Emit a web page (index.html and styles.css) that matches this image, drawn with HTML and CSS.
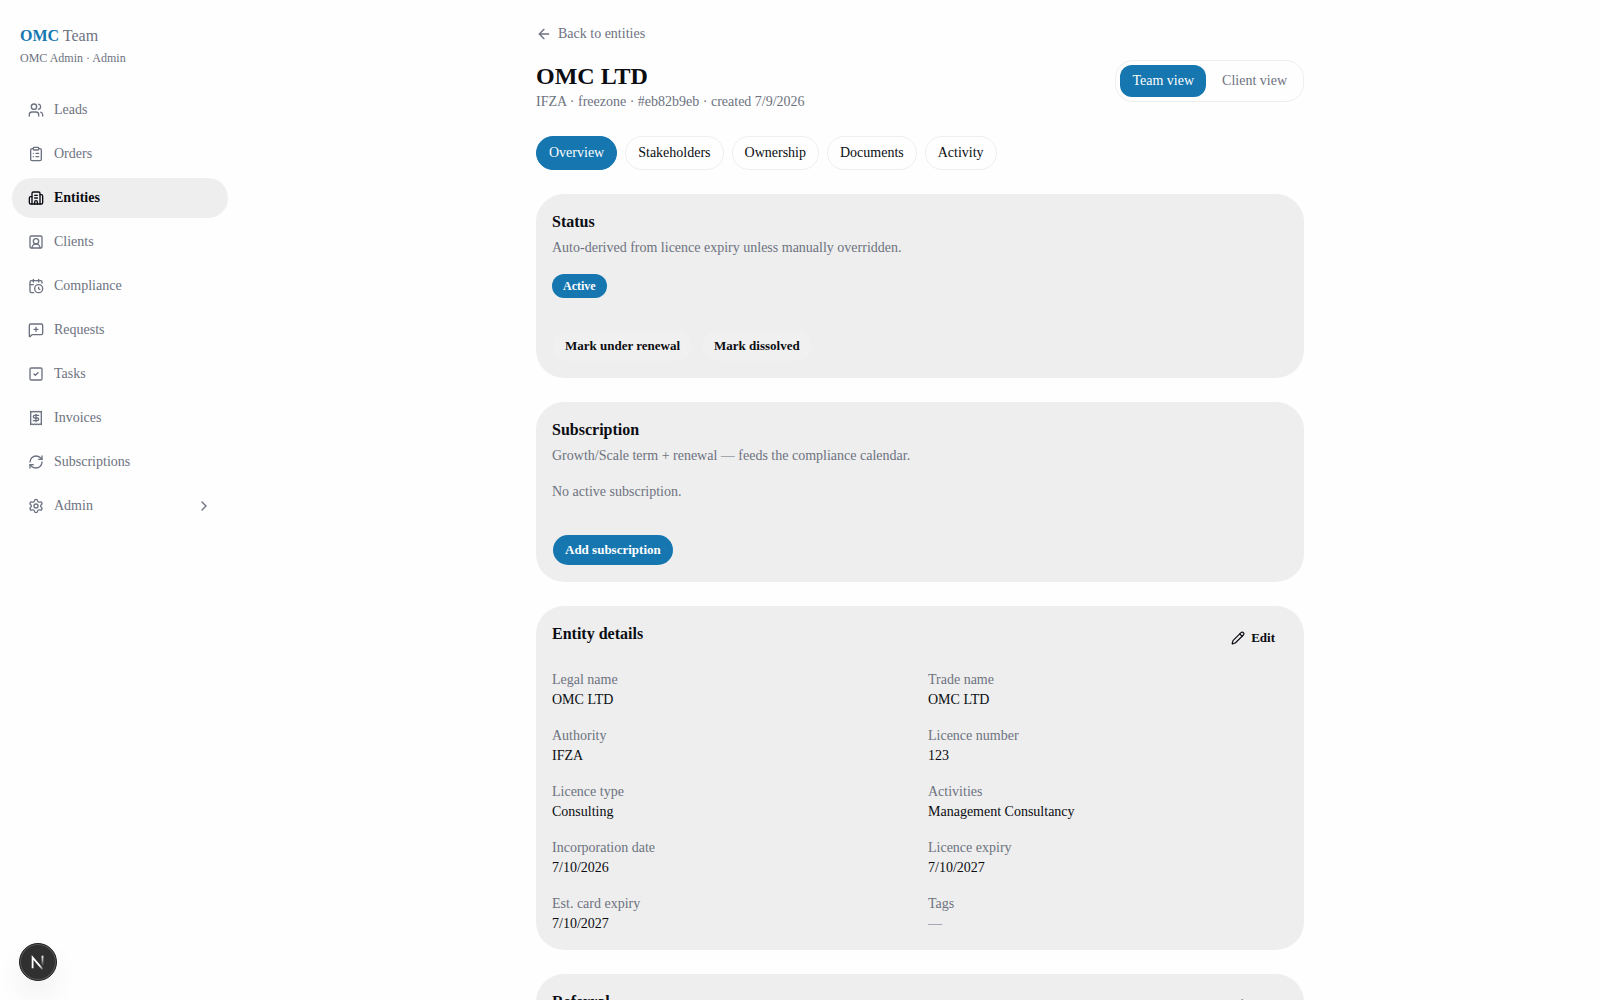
FILE: index.html
```html
<!DOCTYPE html>
<html lang="en">
<head>
  <meta charset="utf-8">
  <meta name="viewport" content="width=device-width, initial-scale=1">
  <title>OMC LTD - OMC Team</title>
  <link rel="stylesheet" href="styles.css">
</head>
<body>
  <aside class="sidebar">
    <div class="brand">
      <div class="brand-name"><strong>OMC</strong> Team</div>
      <div class="brand-user">OMC Admin · Admin</div>
    </div>
    <nav class="nav">
      <a class="nav-item" href="#leads">
        <svg class="icon" viewBox="0 0 24 24"><path d="M16 21v-2a4 4 0 0 0-4-4H6a4 4 0 0 0-4 4v2"/><path d="M16 3.128a4 4 0 0 1 0 7.744"/><path d="M22 21v-2a4 4 0 0 0-3-3.87"/><circle cx="9" cy="7" r="4"/></svg>
        <span>Leads</span>
      </a>
      <a class="nav-item" href="#orders">
        <svg class="icon" viewBox="0 0 24 24"><rect x="8" y="2" width="8" height="4" rx="1"/><path d="M16 4h2a2 2 0 0 1 2 2v14a2 2 0 0 1-2 2H6a2 2 0 0 1-2-2V6a2 2 0 0 1 2-2h2"/><path d="M12 11h4M12 16h4M8 11h.01M8 16h.01"/></svg>
        <span>Orders</span>
      </a>
      <a class="nav-item active" href="#entities">
        <svg class="icon" viewBox="0 0 24 24"><path d="M10 12h4M10 8h4M14 21v-3a2 2 0 0 0-4 0v3"/><path d="M6 10H4a2 2 0 0 0-2 2v7a2 2 0 0 0 2 2h16a2 2 0 0 0 2-2V9a2 2 0 0 0-2-2h-2"/><path d="M6 21V5a2 2 0 0 1 2-2h8a2 2 0 0 1 2 2v16"/></svg>
        <span>Entities</span>
      </a>
      <a class="nav-item" href="#clients">
        <svg class="icon" viewBox="0 0 24 24"><path d="M18 21a6 6 0 0 0-12 0"/><circle cx="12" cy="11" r="4"/><rect x="3" y="3" width="18" height="18" rx="2"/></svg>
        <span>Clients</span>
      </a>
      <a class="nav-item" href="#compliance">
        <svg class="icon" viewBox="0 0 24 24"><path d="M16 14v2.2l1.6 1M16 2v4M8 2v4M3 10h5"/><path d="M21 7.5V6a2 2 0 0 0-2-2H5a2 2 0 0 0-2 2v14a2 2 0 0 0 2 2h3.5"/><circle cx="16" cy="16" r="6"/></svg>
        <span>Compliance</span>
      </a>
      <a class="nav-item" href="#requests">
        <svg class="icon" viewBox="0 0 24 24"><path d="M22 17a2 2 0 0 1-2 2H6.828a2 2 0 0 0-1.414.586l-2.202 2.202A.71.71 0 0 1 2 21.286V5a2 2 0 0 1 2-2h16a2 2 0 0 1 2 2z"/><path d="M12 8v6M9 11h6"/></svg>
        <span>Requests</span>
      </a>
      <a class="nav-item" href="#tasks">
        <svg class="icon" viewBox="0 0 24 24"><rect x="3" y="3" width="18" height="18" rx="2"/><path d="m9 12 2 2 4-4"/></svg>
        <span>Tasks</span>
      </a>
      <a class="nav-item" href="#invoices">
        <svg class="icon" viewBox="0 0 24 24"><path d="M4 2v20l2-1 2 1 2-1 2 1 2-1 2 1 2-1 2 1V2l-2 1-2-1-2 1-2-1-2 1-2-1-2 1Z"/><path d="M16 8h-6a2 2 0 1 0 0 4h4a2 2 0 1 1 0 4H8"/><path d="M12 17.5v-11"/></svg>
        <span>Invoices</span>
      </a>
      <a class="nav-item" href="#subscriptions">
        <svg class="icon" viewBox="0 0 24 24"><path d="M3 12a9 9 0 0 1 9-9 9.75 9.75 0 0 1 6.74 2.74L21 8"/><path d="M21 3v5h-5"/><path d="M21 12a9 9 0 0 1-9 9 9.75 9.75 0 0 1-6.74-2.74L3 16"/><path d="M8 16H3v5"/></svg>
        <span>Subscriptions</span>
      </a>
      <button class="nav-item" type="button">
        <svg class="icon" viewBox="0 0 24 24"><path d="M9.671 4.136a2.34 2.34 0 0 1 4.659 0 2.34 2.34 0 0 0 3.319 1.915 2.34 2.34 0 0 1 2.33 4.033 2.34 2.34 0 0 0 0 3.831 2.34 2.34 0 0 1-2.33 4.033 2.34 2.34 0 0 0-3.319 1.915 2.34 2.34 0 0 1-4.659 0 2.34 2.34 0 0 0-3.32-1.915 2.34 2.34 0 0 1-2.33-4.033 2.34 2.34 0 0 0 0-3.831A2.34 2.34 0 0 1 6.35 6.051a2.34 2.34 0 0 0 3.319-1.915"/><circle cx="12" cy="12" r="3"/></svg>
        <span>Admin</span>
        <svg class="icon chevron" viewBox="0 0 24 24"><path d="m9 18 6-6-6-6"/></svg>
      </button>
    </nav>
  </aside>

  <main class="main">
    <div class="content">
      <a class="back" href="#entities">
        <svg class="icon" viewBox="0 0 24 24"><path d="m12 19-7-7 7-7"/><path d="M19 12H5"/></svg>
        <span>Back to entities</span>
      </a>

      <header class="page-header">
        <div>
          <h1>OMC LTD</h1>
          <p class="muted">IFZA · freezone · #eb82b9eb · created 7/9/2026</p>
        </div>
        <div class="view-toggle">
          <button class="view-btn active" type="button">Team view</button>
          <button class="view-btn" type="button">Client view</button>
        </div>
      </header>

      <nav class="tabs">
        <a class="tab active" href="#overview">Overview</a>
        <a class="tab" href="#stakeholders">Stakeholders</a>
        <a class="tab" href="#ownership">Ownership</a>
        <a class="tab" href="#documents">Documents</a>
        <a class="tab" href="#activity">Activity</a>
      </nav>

      <section class="card">
        <h2>Status</h2>
        <p class="card-desc">Auto-derived from licence expiry unless manually overridden.</p>
        <div class="card-body"><span class="badge">Active</span></div>
        <div class="card-actions">
          <button class="btn btn-secondary" type="button">Mark under renewal</button>
          <button class="btn btn-secondary" type="button">Mark dissolved</button>
        </div>
      </section>

      <section class="card">
        <h2>Subscription</h2>
        <p class="card-desc">Growth/Scale term + renewal — feeds the compliance calendar.</p>
        <div class="card-body muted">No active subscription.</div>
        <div class="card-actions">
          <button class="btn btn-primary" type="button">Add subscription</button>
        </div>
      </section>

      <section class="card">
        <div class="card-header">
          <h2>Entity details</h2>
          <button class="btn btn-ghost" type="button">
            <svg class="icon" viewBox="0 0 24 24"><path d="M21.174 6.812a1 1 0 0 0-3.986-3.987L3.842 16.174a2 2 0 0 0-.5.83l-1.321 4.352a.5.5 0 0 0 .623.622l4.353-1.32a2 2 0 0 0 .83-.497z"/><path d="m15 5 4 4"/></svg>
            Edit
          </button>
        </div>
        <dl class="details">
          <div><dt>Legal name</dt><dd>OMC LTD</dd></div>
          <div><dt>Trade name</dt><dd>OMC LTD</dd></div>
          <div><dt>Authority</dt><dd>IFZA</dd></div>
          <div><dt>Licence number</dt><dd>123</dd></div>
          <div><dt>Licence type</dt><dd>Consulting</dd></div>
          <div><dt>Activities</dt><dd>Management Consultancy</dd></div>
          <div><dt>Incorporation date</dt><dd>7/10/2026</dd></div>
          <div><dt>Licence expiry</dt><dd>7/10/2027</dd></div>
          <div><dt>Est. card expiry</dt><dd>7/10/2027</dd></div>
          <div><dt>Tags</dt><dd class="muted">—</dd></div>
        </dl>
      </section>

      <section class="card">
        <div class="card-header">
          <h2>Referral</h2>
          <button class="btn btn-ghost" type="button">
            <svg class="icon" viewBox="0 0 24 24"><path d="M21.174 6.812a1 1 0 0 0-3.986-3.987L3.842 16.174a2 2 0 0 0-.5.83l-1.321 4.352a.5.5 0 0 0 .623.622l4.353-1.32a2 2 0 0 0 .83-.497z"/><path d="m15 5 4 4"/></svg>
            Edit
          </button>
        </div>
      </section>
    </div>
  </main>

  <button class="dev-badge" type="button" aria-label="Open dev tools">
    <svg viewBox="0 0 40 40" fill="none">
      <defs>
        <linearGradient id="diag" x1="20" y1="20" x2="26" y2="28" gradientUnits="userSpaceOnUse">
          <stop offset="0.4" stop-color="#fff"/>
          <stop offset="1" stop-color="#fff" stop-opacity="0.2"/>
        </linearGradient>
        <linearGradient id="stem" x1="25" y1="13" x2="25" y2="25" gradientUnits="userSpaceOnUse">
          <stop stop-color="#fff"/>
          <stop offset="1" stop-color="#fff" stop-opacity="0"/>
        </linearGradient>
      </defs>
      <path d="M14 27V15L25 28" stroke="url(#diag)" stroke-width="2"/>
      <path d="M25 13v11" stroke="url(#stem)" stroke-width="2"/>
    </svg>
  </button>
</body>
</html>
```
FILE: styles.css
```css
* {
  box-sizing: border-box;
}

body {
  margin: 0;
  display: flex;
  height: 100vh;
  overflow: hidden;
  background: #fefefe;
  color: #0b0d12;
  font-family: "Liberation Serif", "Times New Roman", serif;
  font-size: 14px;
  line-height: 20px;
}

h1, h2, p, dl, dd {
  margin: 0;
}

a {
  color: inherit;
  text-decoration: none;
}

button {
  font: inherit;
  cursor: pointer;
}

.icon {
  width: 16px;
  height: 16px;
  flex-shrink: 0;
  fill: none;
  stroke: currentColor;
  stroke-width: 2;
  stroke-linecap: round;
  stroke-linejoin: round;
}

.muted {
  color: #6d7280;
}

/* Sidebar */
.sidebar {
  width: 240px;
  flex-shrink: 0;
  padding: 24px 12px;
}

.brand {
  padding: 0 8px;
  margin-bottom: 24px;
  color: #6d7280;
}

.brand-name {
  font-size: 16px;
  line-height: 24px;
}

.brand-name strong {
  color: #1576b0;
}

.brand-user {
  margin-top: 2px;
  font-size: 12px;
  line-height: 16px;
}

.nav {
  display: flex;
  flex-direction: column;
  gap: 4px;
}

.nav-item {
  display: flex;
  align-items: center;
  gap: 10px;
  height: 40px;
  padding: 0 16px;
  border: none;
  border-radius: 20px;
  background: none;
  color: #6d7280;
}

.nav-item.active {
  background: #eee;
  color: #0b0d12;
  font-weight: bold;
}

.chevron {
  margin-left: auto;
}

/* Page */
.main {
  flex: 1;
  padding: 24px;
  overflow-y: auto;
  scrollbar-width: none;
}

.content {
  max-width: 768px;
  margin: 0 auto;
}

.back {
  display: inline-flex;
  align-items: center;
  gap: 6px;
  color: #6d7280;
  vertical-align: top;
}

.page-header {
  display: flex;
  justify-content: space-between;
  align-items: flex-start;
  margin: 16px 0 24px;
}

h1 {
  font-size: 24px;
  line-height: 32px;
}

.view-toggle {
  display: flex;
  gap: 4px;
  padding: 4px;
  border: 1px solid #eee;
  border-radius: 18px;
}

.view-btn {
  padding: 6px 12px;
  border: none;
  border-radius: 12px;
  background: none;
  color: #6d7280;
}

.view-btn.active {
  background: #1576b0;
  color: #fefefe;
}

.tabs {
  display: flex;
  gap: 8px;
}

.tab {
  padding: 6px 12px;
  border: 1px solid #eee;
  border-radius: 18px;
}

.tab.active {
  border-color: #1576b0;
  background: #1576b0;
  color: #fefefe;
}

/* Cards */
.card {
  margin-top: 24px;
  padding: 16px;
  border-radius: 28px;
  background: #eee;
}

.card h2 {
  font-size: 16px;
  line-height: 24px;
}

.card-desc {
  margin-top: 4px;
  color: #6d7280;
}

.card-body {
  margin-top: 16px;
}

.card-actions {
  display: flex;
  gap: 8px;
  margin-top: 32px;
}

.card-header {
  display: flex;
  justify-content: space-between;
  align-items: flex-start;
}

.badge {
  display: block;
  width: fit-content;
  padding: 4px 11px;
  border-radius: 12px;
  background: #1576b0;
  color: #fefefe;
  font-size: 12px;
  font-weight: bold;
  line-height: 16px;
}

.btn {
  display: flex;
  align-items: center;
  gap: 6px;
  height: 32px;
  padding: 0 12px;
  border: 1px solid transparent;
  border-radius: 16px;
  background-clip: padding-box;
  color: #0b0d12;
  font-size: 13px;
  font-weight: bold;
}

.btn .icon {
  width: 14px;
  height: 14px;
}

.btn-primary {
  background-color: #1576b0;
  color: #fefefe;
}

.btn-secondary {
  background-color: #f0f0f0;
}

.btn-ghost {
  background-color: transparent;
}

.details {
  display: grid;
  grid-template-columns: 1fr 1fr;
  gap: 16px;
  margin-top: 16px;
}

.details dt {
  color: #6d7280;
}

/* Floating dev tools button */
.dev-badge {
  position: fixed;
  left: 19px;
  bottom: 19px;
  width: 38px;
  height: 38px;
  padding: 0;
  border: 1px solid #222;
  border-radius: 50%;
  background: #303030;
  box-shadow: inset 0 0 0 1px #5a5a5a, 0 16px 32px -8px rgba(0, 0, 0, 0.16);
}

.dev-badge svg {
  display: block;
  width: 100%;
}
```
